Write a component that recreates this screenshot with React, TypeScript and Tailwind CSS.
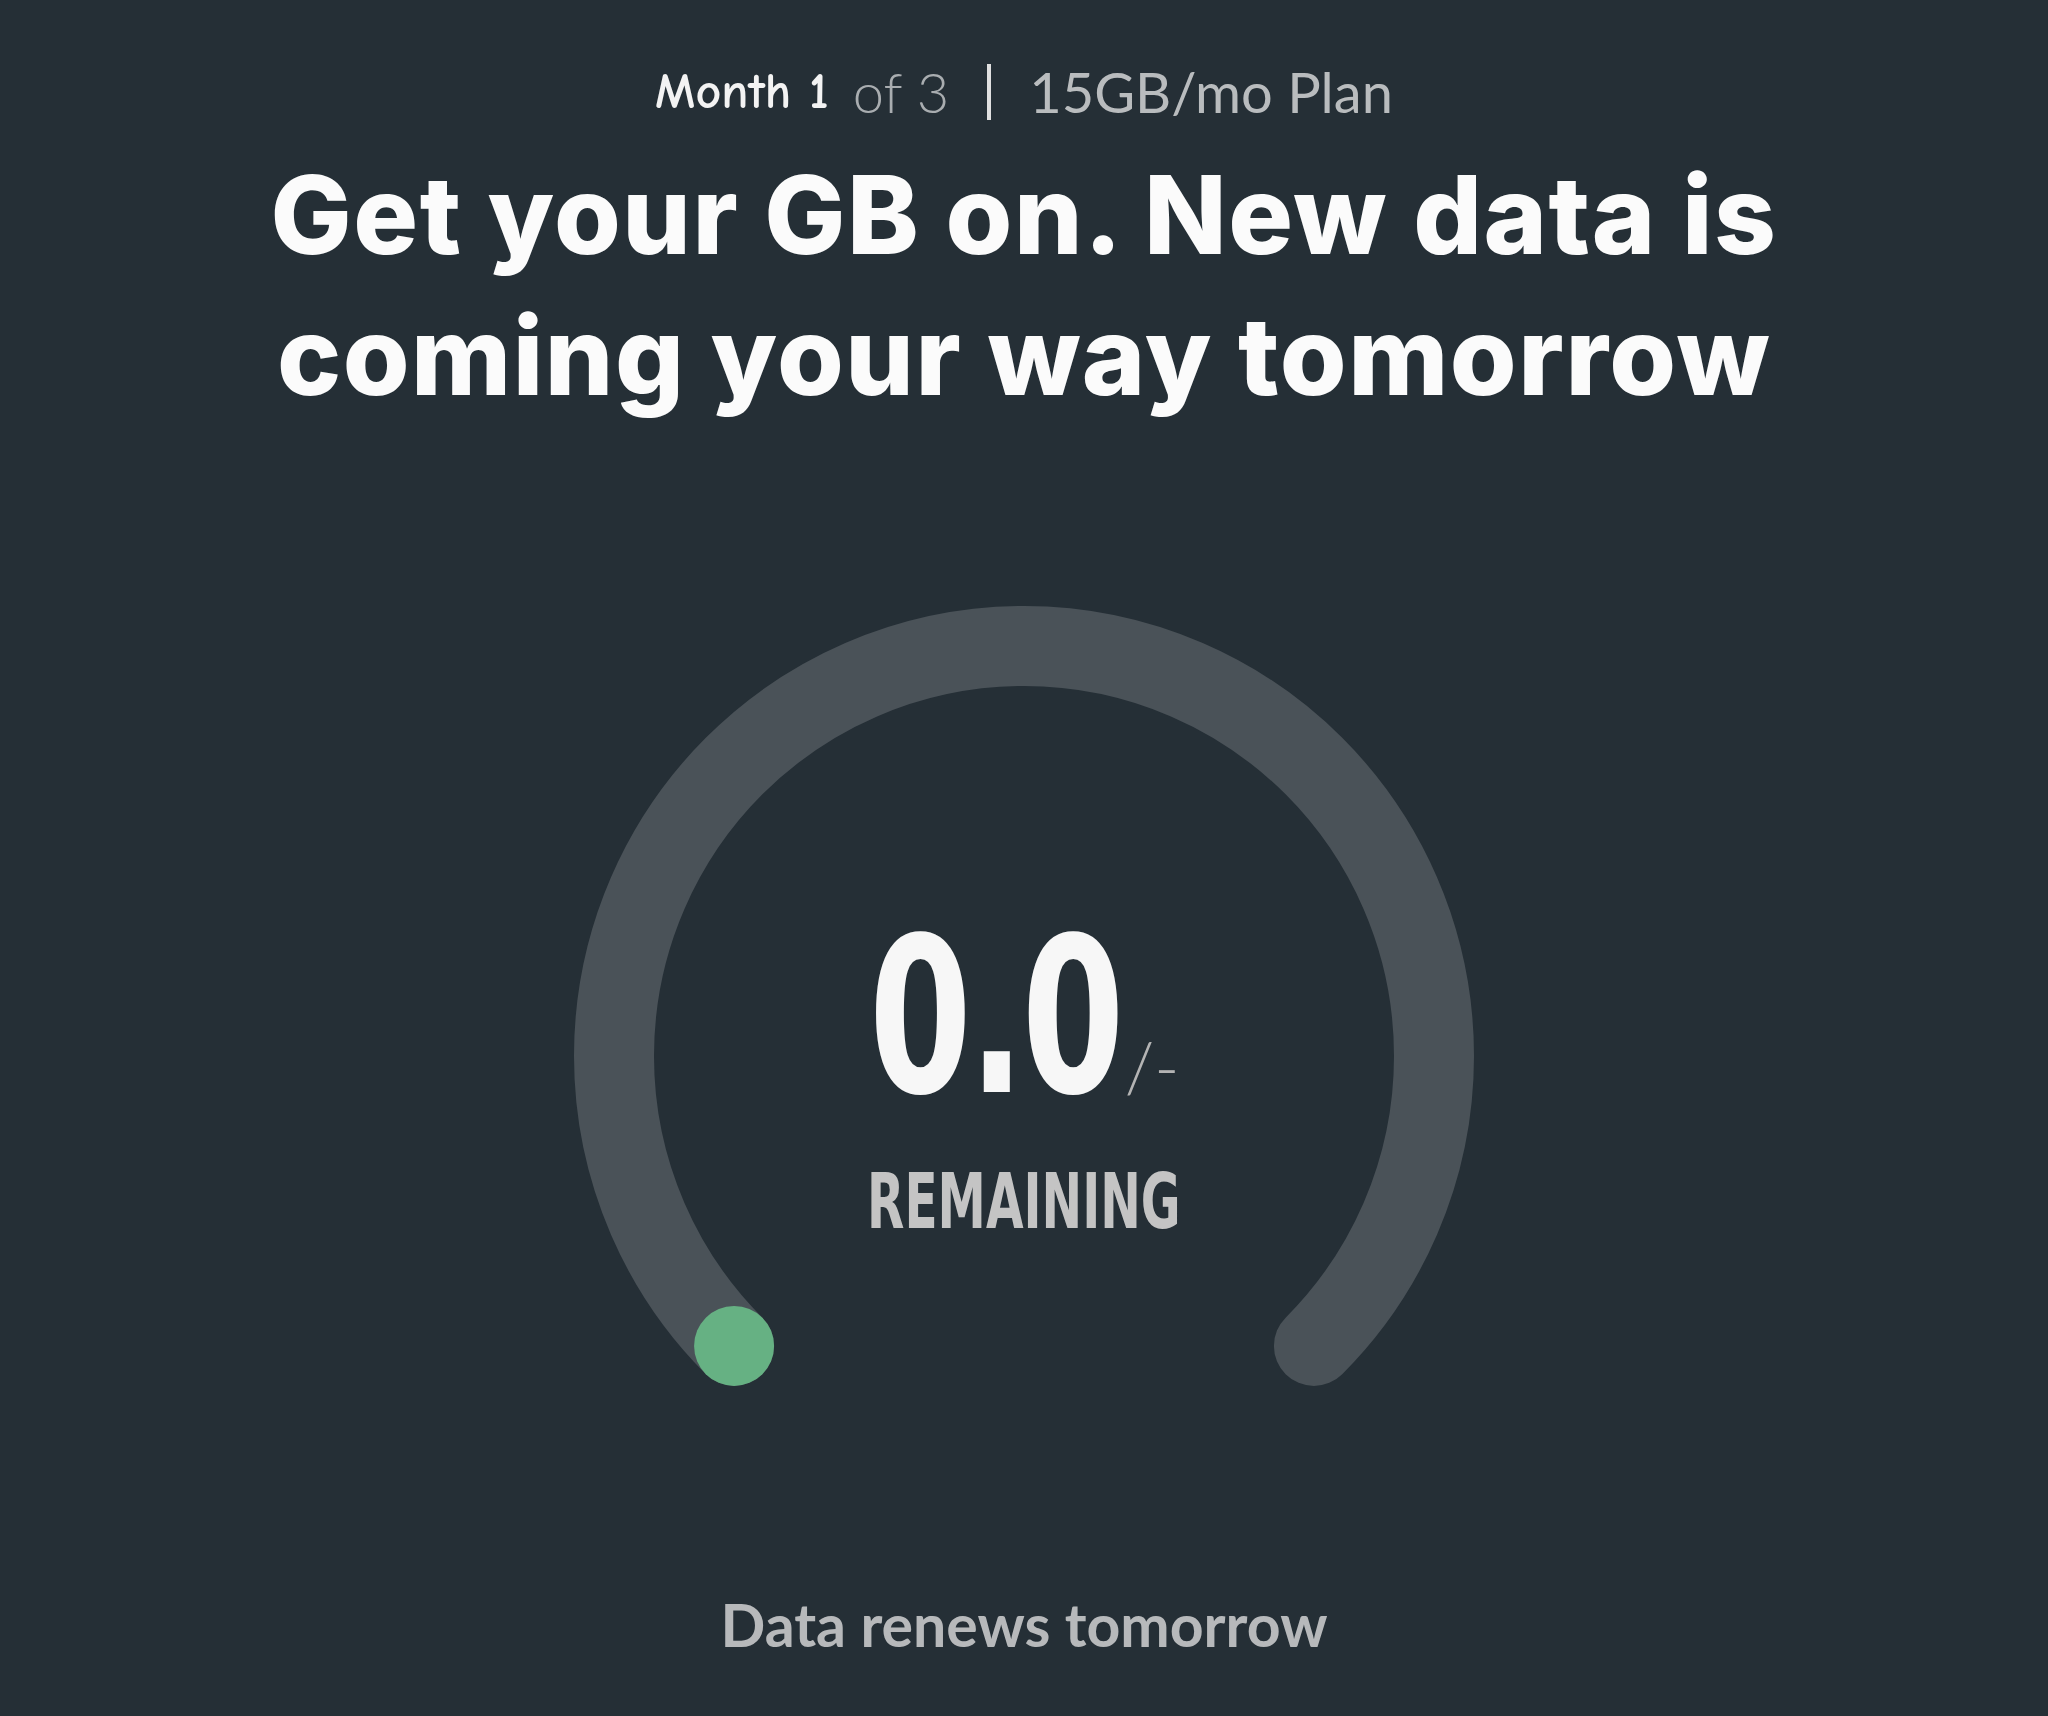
import React from "react";

const Gauge = () => {
  // arc: 270deg, from bottom-left round over the top to bottom-right
  const r = 410;
  const c = 450;
  const d = r * Math.SQRT1_2;
  const startX = c - d;
  const endX = c + d;
  const y = c + d;

  return (
    <div className="relative w-[900px] h-[800px]">
      <svg width="900" height="800" viewBox="0 0 900 800" className="block">
        <path
          d={`M ${startX} ${y} A ${r} ${r} 0 1 1 ${endX} ${y}`}
          fill="none"
          stroke="#4a5258"
          strokeWidth="80"
          strokeLinecap="round"
        />
        <circle cx={startX} cy={y} r="40" fill="#66b183" />
      </svg>

      <div className="absolute inset-x-0 top-[304px] flex flex-col items-center">
        <div className="flex items-baseline leading-none">
          <div className="w-[250px] whitespace-nowrap">
            <span className="inline-block font-['DejaVu_Sans_Condensed',sans-serif] font-bold text-[216px] text-[#f7f7f7] tracking-[-4px] scale-x-[0.76] origin-left">
              0.0
            </span>
          </div>
          <span className="ml-[6px] font-['Lato',sans-serif] font-light text-[68px] text-[#b4b4b4]">
            /-
          </span>
        </div>
        <div className="mt-[38px] leading-none font-['DejaVu_Sans_Condensed',sans-serif] font-bold text-[76px] text-[#c4c4c4] scale-x-[0.71]">
          REMAINING
        </div>
      </div>
    </div>
  );
};

export default function App() {
  return (
    <div className="w-[2048px] h-[1716px] bg-[#252f36] flex flex-col items-center overflow-hidden">
      <div className="pt-[64px] flex items-center gap-[24px] leading-none text-[56px]">
        <span className="font-['Comic_Sans_MS','Comic_Neue',cursive] font-bold text-[#f3f3f3] text-[50px]">
          Month 1
        </span>
        <span className="font-['Lato',sans-serif] font-light text-[#a9adb0]">of 3</span>
        <span className="w-[4px] h-[56px] bg-[#e0e0e0] mx-[14px]" />
        <span className="font-['Lato',sans-serif] text-[#b9bcbe]">15GB/mo Plan</span>
      </div>

      <h1 className="mt-[24px] text-center font-['Inter',sans-serif] font-extrabold text-[108px] leading-[141px] tracking-[1.5px] text-[#fbfbfb] w-[1900px]">
        Get your GB on. New data is
        <br />
        coming your way tomorrow
      </h1>

      <div className="mt-[180px]">
        <Gauge />
      </div>

      <div className="mt-[189px] font-['Lato',sans-serif] font-bold text-[59px] text-[#b7b9bb] leading-none">
        Data renews tomorrow
      </div>
    </div>
  );
}
